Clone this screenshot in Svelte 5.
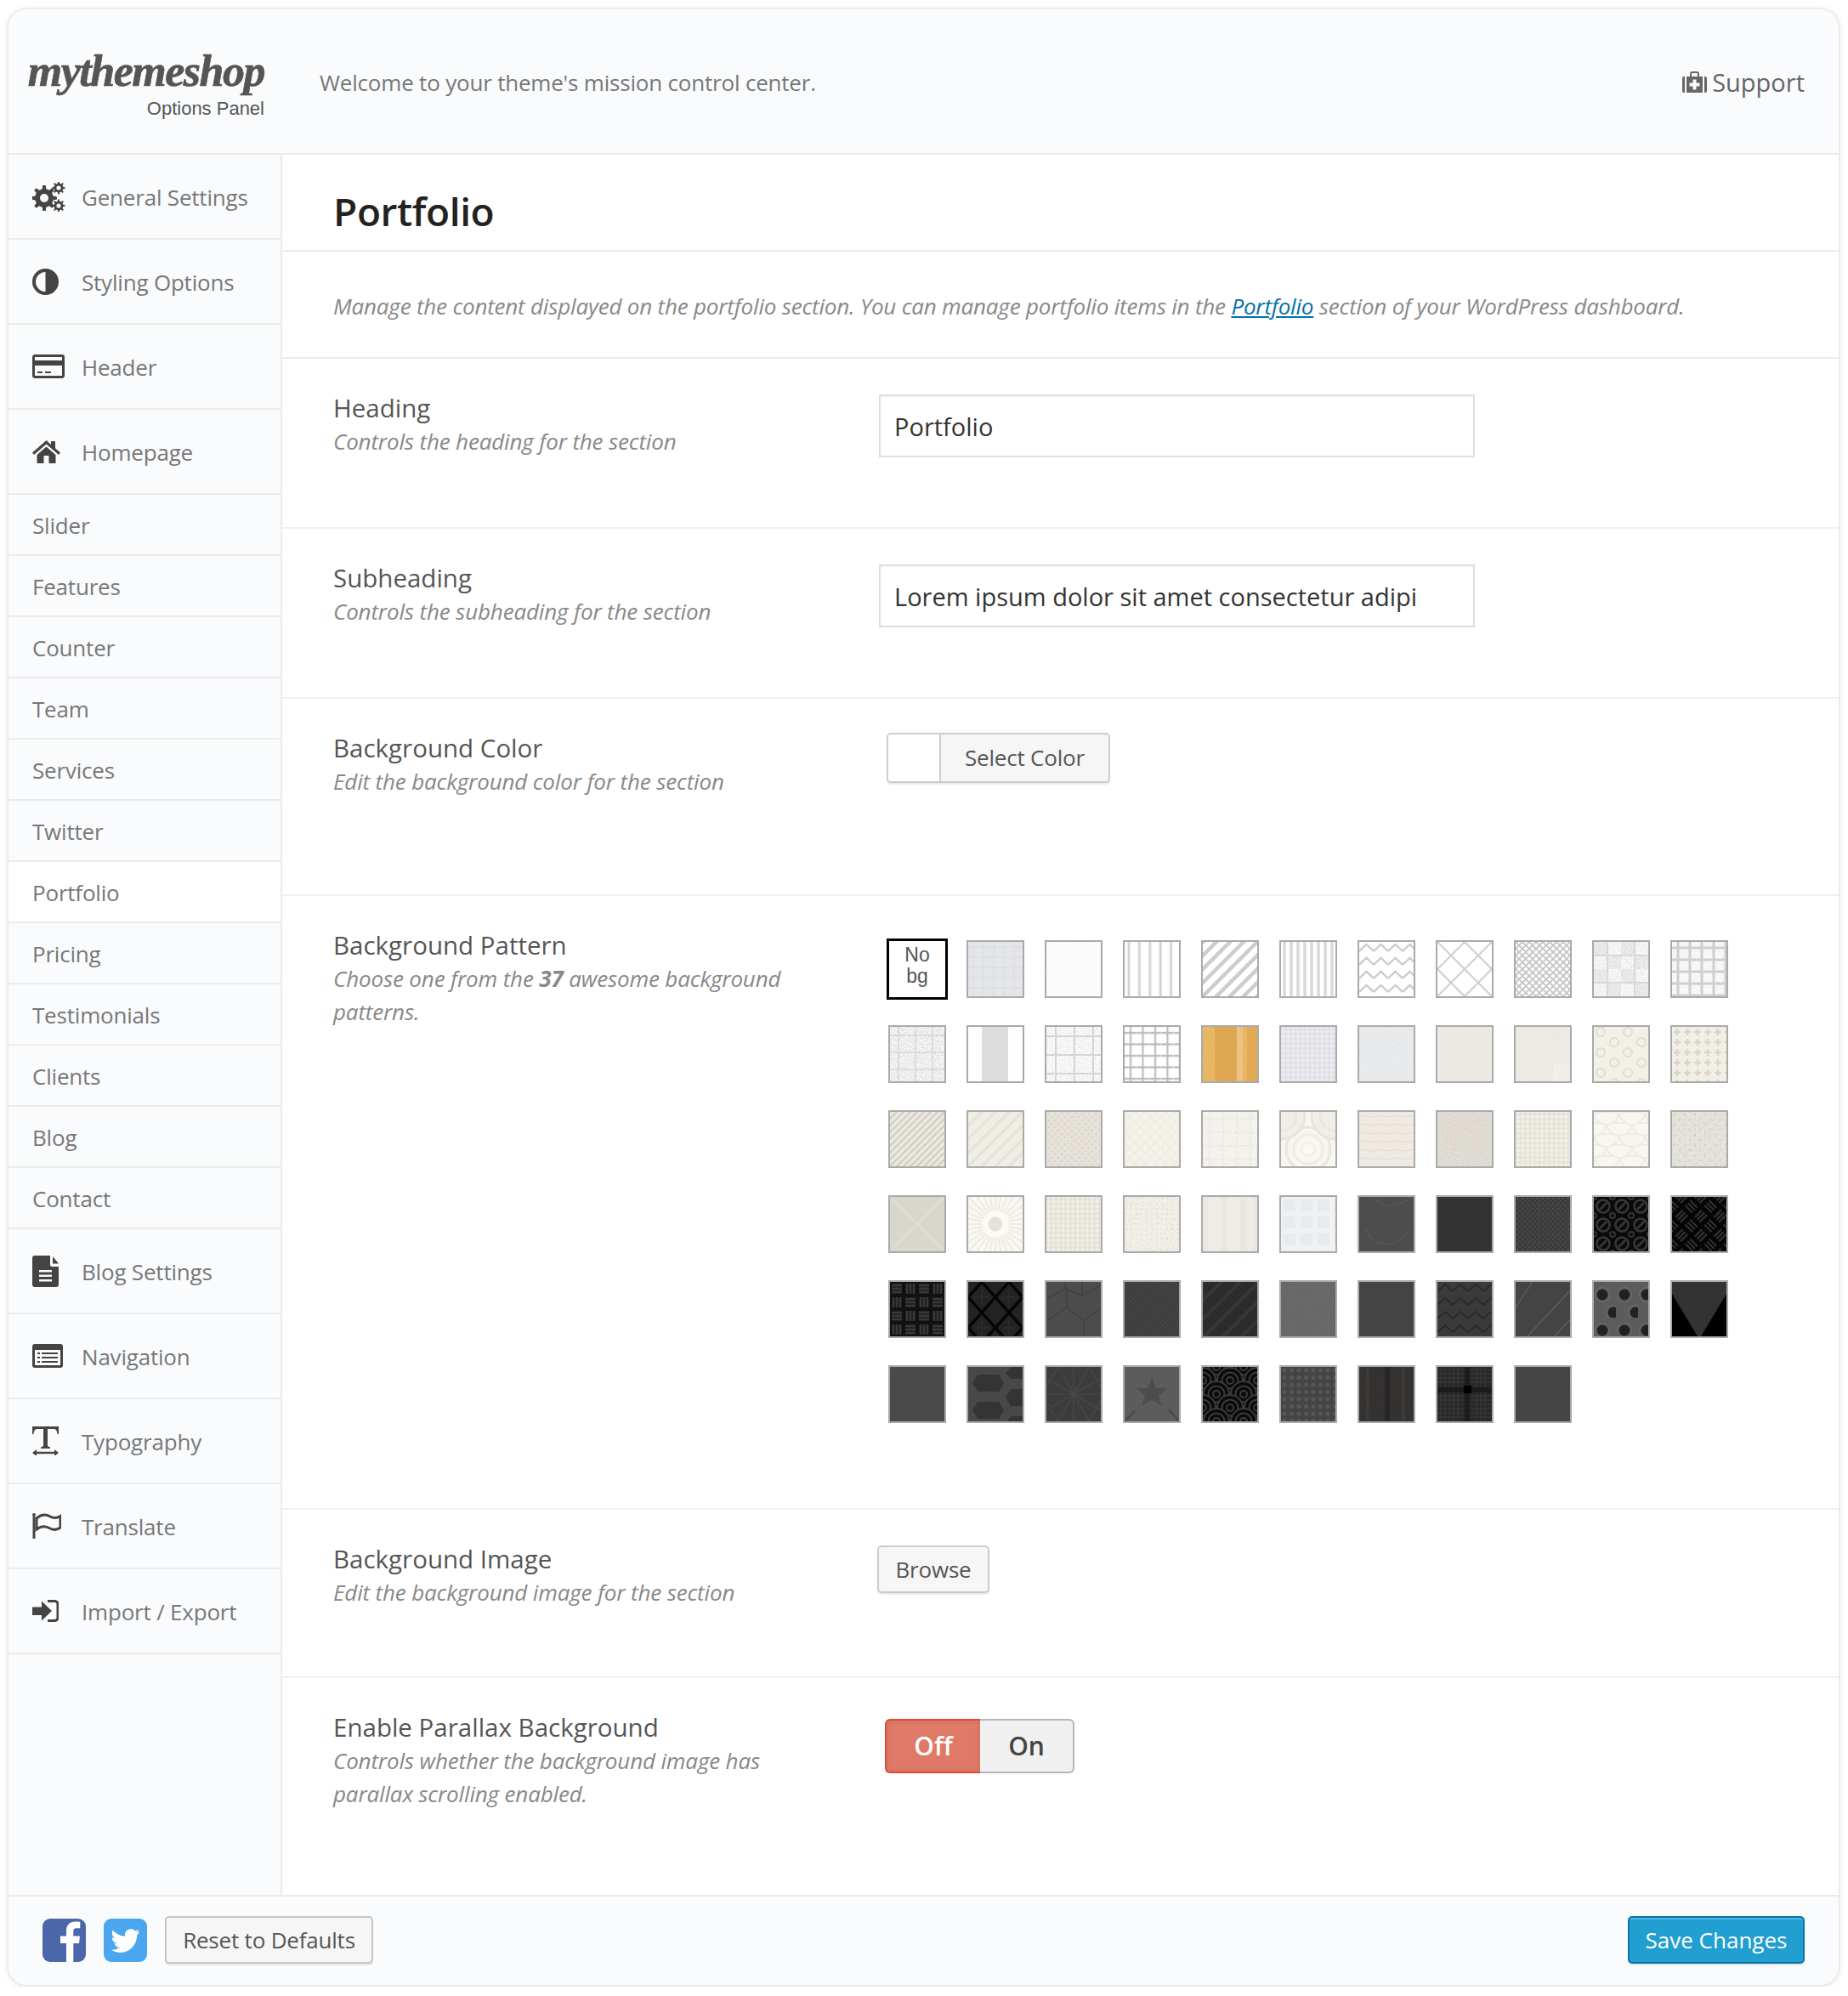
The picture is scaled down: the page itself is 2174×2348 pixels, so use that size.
<script>
  const gear = (cx, cy, R, r, n, hole) => {
    const pts = [];
    const step = (Math.PI * 2) / n;
    for (let i = 0; i < n; i++) {
      const a = i * step;
      const t = step * 0.2;
      [[r, a - t * 1.35], [R, a - t * 0.75], [R, a + t * 0.75], [r, a + t * 1.35]].forEach(([q, b]) =>
        pts.push(`${(cx + q * Math.cos(b)).toFixed(2)} ${(cy + q * Math.sin(b)).toFixed(2)}`)
      );
    }
    return `M${pts.join('L')}Z` + circ(cx, cy, hole);
  };
  function circ(cx, cy, r) {
    return `M${cx - r} ${cy}a${r} ${r} 0 1 0 ${2 * r} 0a${r} ${r} 0 1 0 ${-2 * r} 0z`;
  }
  const D = '#444';
  const W = '#fafbfd';
  const icons = {
    cogs: { w: 39, h: 35, p: [[gear(14, 19, 15, 11, 8, 5), D], [gear(31, 7, 7.5, 5.4, 8, 2.6), D], [gear(31, 28, 7.5, 5.4, 8, 2.6), D]] },
    half: { w: 31, h: 31, p: [[circ(15.5, 15.5, 13.5), 'none', D, 4], ['M15.5 2a13.5 13.5 0 0 1 0 27z', D]] },
    card: { w: 38, h: 28, p: [['M3 1.5h32a1.5 1.5 0 0 1 1.5 1.500v22a1.5 1.500 0 0 1-1.500 1.500h-32a1.500 1.500 0 0 1-1.500-1.500v-22a1.500 1.500 0 0 1 1.500-1.500z', 'none', D, 3], ['M2 7h34v6H2z', D], ['M6 20h6v2H6zM15 20h7v2h-7z', D]] },
    home: { w: 33, h: 28, p: [['M16.500 1 L0 15.500 l2 2.500 L16.500 5.500 L31 18 l2-2.500 L27 10.200 V2h-5v4z', D], ['M5.500 18 V28 h8 V19 h6 v9 h8 V18 L16.500 8.500z', D]] },
    file: { w: 31, h: 37, p: [['M3 0H21V11a2 2 0 0 0 2 2H31V34a3 3 0 0 1-3 3H3a3 3 0 0 1-3-3V3a3 3 0 0 1 3-3z', D], ['M24 1L31 9.500H24z', D], ['M8 17H23V19.500H8zM8 22.500H23V25H8zM8 28H23V30.500H8z', W]] },
    list: { w: 36, h: 28, p: [['M3 0H33a3 3 0 0 1 3 3V25a3 3 0 0 1-3 3H3a3 3 0 0 1-3-3V3a3 3 0 0 1 3-3z', D], ['M3 7H33V25H3z', W], ['M6 10h3v2H6zM6 15h3v2H6zM6 20h3v2H6zM11 10h19v2H11zM11 15h19v2H11zM11 20h19v2H11z', D]] },
    type: { w: 31, h: 34, p: [['M0 0H31V9H29.500C29 5 28 3 25 3H18V23L21 24.500V26H10V24.500L13 23V3H6C3 3 2 5 1.500 9H0z', D], ['M0 31L5 27V29.800H26V27L31 31L26 35V32.200H5V35z', D]] },
    flag: { w: 34, h: 30, p: [['M2 4V30', 'none', D, 3], [circ(2, 2, 2), D], ['M5 6C11 1 16 1 21 4C25 6 29 6 33 3.500V17C29 20 25 20 21 18C16 15 10 15 5 19z', 'none', D, 3]] },
    imp: { w: 31, h: 26, p: [['M0 8.500H11V1.500L23 13L11 24.500V18H0z', D], ['M18 1.500H26A3.500 3.500 0 0 1 30 5V21A3.500 3.500 0 0 1 26 24.500H18', 'none', D, 3]] }
  };

  const main1 = [
    { t: 'General Settings', i: 'cogs' },
    { t: 'Styling Options', i: 'half' },
    { t: 'Header', i: 'card' },
    { t: 'Homepage', i: 'home' }
  ];
  const subs = ['Slider', 'Features', 'Counter', 'Team', 'Services', 'Twitter', 'Portfolio', 'Pricing', 'Testimonials', 'Clients', 'Blog', 'Contact'];
  const main2 = [
    { t: 'Blog Settings', i: 'file' },
    { t: 'Navigation', i: 'list' },
    { t: 'Typography', i: 'type' },
    { t: 'Translate', i: 'flag' },
    { t: 'Import / Export', i: 'imp' }
  ];

  const S = (b, w, h, l = [], n = 0, r = 0) => ({ b, w, h, l, n, r });
  const P = (b, n = 0) => S(b, 64, 64, [], n);
  const grid = (t, c, w) => [[`M${t / 2} 0V${t}M0 ${t / 2}H${t}`, c, w]];
  const diag = (t, c, w) => [[`M${-t / 2} ${t / 2}L${t / 2} ${-t / 2}M0 ${t}L${t} 0M${t / 2} ${t * 1.5}L${t * 1.5} ${t / 2}`, c, w]];
  const cross = (t, c, w) => [[`M0 0L${t} ${t}M${t} 0L0 ${t}`, c, w]];
  const F = (d, f) => [d, null, 0, f];
  const basket = 'M2 4H14M2 8H14M2 12H14M20 2V14M24 2V14M28 2V14M4 18V30M8 18V30M12 18V30M18 20H30M18 24H30M18 28H30';
  const check = (b, c) => S(b, 8, 8, [F('M0 0H4V4H0zM4 4H8V8H4z', c)], 0, 45);
  const rays = (cx, cy, r, n) => Array.from({ length: n }, (_, i) => {
    const a = (i * 2 * Math.PI) / n;
    return `M${cx} ${cy}L${(cx + r * Math.cos(a)).toFixed(1)} ${(cy + r * Math.sin(a)).toFixed(1)}`;
  }).join('');
  const ring = (cx, cy) => [[circ(cx, cy, 15), '#3a3a3a', 2, '#0a0a0a'], [circ(cx, cy, 9.500), '#3a3a3a', 2, '#0a0a0a'], [circ(cx, cy, 4), '#3a3a3a', 2, '#0a0a0a']];
  const scales = () => {
    const out = [];
    for (let row = 6; row >= -1; row--) {
      const y = row * 13;
      const off = row % 2 ? -15 : 0;
      for (let x = off; x < 64; x += 30) {
        out.push([`M${x} ${y}A15 15 0 0 0 ${x + 30} ${y}z`, '#eeebe2', 2, '#f8f6ee']);
      }
    }
    return out;
  };

  const patterns = [
    S('#e6e8eb', 12, 12, grid(12, '#dcdee2', 1), 0.06),
    P('#fcfcfc', 0.02),
    S('#ffffff', 12.400, 12, [['M5 0V12', '#d4d4d4', 3]]),
    S('#ffffff', 16, 16, diag(16, '#cdcdcd', 4.500)),
    S('#ffffff', 8, 8, [['M4 0V8', '#d9d9d9', 3.500]]),
    S('#ffffff', 17, 16, [['M0 11L8.500 3L17 11', '#cccccc', 2.400]]),
    S('#ffffff', 32, 32, cross(32, '#d0d0d0', 2.200)),
    S('#ffffff', 8, 8, cross(8, '#c4c4c4', 1.800)),
    S('#fcfcfc', 32, 32, [F('M0 0H16V16H0zM16 16H32V32H16z', '#f0f0f0'), ...grid(32, '#e0e0e0', 2)], 0.16),
    S('#fbfbfb', 14, 14, grid(14, '#d2d2d2', 3), 0.08),
    S('#fafafa', 20, 20, grid(20, '#dfdfdf', 1.500), 0.22),
    S('#ffffff', 64, 64, [F('M16 0h31v64h-31z', '#dddddd')]),
    S('#fefefe', 22, 22, grid(22, '#dcdcdc', 2), 0.16),
    S('#ffffff', 14.500, 13.500, grid(14, '#bdbdbd', 2.200)),
    S('#edb964', 64, 64, [F('M14 0H42V64H14z', '#e3a950'), F('M40 0H47V64H40z', '#f2c684'), F('M52 0H64V64H52z', '#e7ad52')], 0.1),
    check('#ecebf0', '#dfdfe6'),
    P('#ebedef', 0.07),
    P('#efece5', 0.05),
    S('#efece5', 64, 64, [F('M44 44H64V64H44z', '#f3f0ea')], 0.04),
    S('#f3f0e7', 32, 24, [[circ(8, 6, 5) + circ(24, 18, 5), '#e0ddd3', 2]]),
    S('#f2efe6', 12, 12, [['M6 2V10M2 6H10', '#d9d5ca', 2.500]]),

    S('#ebe8df', 8, 8, diag(8, '#cfccc2', 2)),
    S('#f0ede4', 16, 16, diag(16, '#e5e2d8', 3)),
    S('#ebe7df', 8, 8, [F(circ(2, 2, 1.500) + circ(6, 6, 1.500), '#dfdbd2')], 0.1),
    S('#f5f2ea', 12, 12, cross(12, '#edeae1', 1.500)),
    S('#f9f7f1', 16, 16, grid(16, '#efebe3', 1), 0.1),
    S('#f8f6ee', 64, 64, [[circ(32, 44, 26), '#e8e6de', 3, '#f7f5ed'], [circ(32, 44, 17), '#eeece5', 3, '#f9f7f0'], [circ(32, 44, 8), '#f2f0ea', 3, '#fbfaf4'], [circ(0, 4, 28), '#e6e4dc', 3, '#f0eee7'], [circ(0, 4, 18), '#e9e7df', 3, '#f0eee7'], [circ(64, 4, 28), '#e6e4dc', 3, '#f0eee7'], [circ(64, 4, 18), '#e9e7df', 3, '#f0eee7']]),
    S('#f1ede4', 20, 10, [['M0 5C5 2 10 8 20 5', '#e6e2d8', 1.500]], 0.05),
    P('#e5e1d8', 0.14),
    check('#f1eee5', '#e5e2d8'),
    S('#f8f6ee', 64, 64, scales()),
    S('#ece9e1', 12, 12, [F(circ(3, 3, 1.500) + circ(9, 9, 1.500), '#dedbd2')], 0.16),

    S('#d9d6ce', 64, 64, [['M0 0L64 64M64 0L0 64', '#e2e0d9', 1.200]]),
    S('#f9f7f0', 64, 64, [[rays(32, 32, 46, 32), '#eeebe2', 2], [circ(32, 32, 16), null, 0, '#fbfaf5'], [circ(32, 32, 8.500), null, 0, '#e3e2dc']]),
    check('#f1eee6', '#e3e0d7'),
    S('#f7f4ec', 6, 6, [F(circ(2, 2, 1), '#ece8de')], 0.14),
    S('#ebe7df', 64, 64, [F('M6 0H22V64H6zM28 0H44V64H28zM52 0H60V64H52z', '#efece5')]),
    S('#f0f1f3', 20, 20, [F('M3 3H17V17H3z', '#e9eaed')]),
    S('#4d4d4d', 64, 64, [['M18 0C26 14 40 14 62 0M6 36C18 62 44 62 62 36', '#575757', 1.200]]),
    P('#333333', 0.02),
    S('#3b3b3b', 6, 6, [F(circ(2, 2, 1.400) + circ(5, 5, 1.400), '#4a4a4a')]),
    S('#0a0a0a', 22, 22, [[circ(11, 11, 7.500), '#383838', 2.500], ['M7 15L15 7', '#383838', 2.500], [circ(0, 0, 3) + circ(22, 0, 3) + circ(0, 22, 3) + circ(22, 22, 3), '#333', 2]]),
    S('#050505', 32, 32, [[basket, '#333333', 2.200]], 0, 45),

    S('#111111', 32, 32, [[basket, '#383838', 2.800]]),
    S('#232323', 32, 36, [['M16 0L32 18L16 36L0 18z', '#050505', 3.500], ['M16 10V26M8 18H24', '#2c2c2c', 1.500]]),
    S('#4c4c4c', 64, 64, [['M0 20L22 8V0M42 0L42 16L64 4M0 46L24 30L44 46V64M44 46L64 30M22 8L42 16M24 30V8', '#434343', 2]]),
    S('#3e3e3e', 6, 6, diag(6, '#464646', 1.200)),
    S('#2c2c2c', 22, 22, diag(22, '#373737', 3.500)),
    P('#666666', 0.3),
    P('#444444', 0.02),
    S('#3a3a3a', 18, 16, [['M0 11L9 3L18 11', '#292929', 2]]),
    S('#444444', 64, 64, [['M-4 36L20 0M14 64L64 10M46 64L64 44', '#5e5e5e', 1.200]]),
    S('#5b5b5b', 26, 42, [F(circ(10, 15, 6.500) + circ(23, 36, 6.500), '#1f1f1f'), [circ(10, 15, 8.500) + circ(23, 36, 8.500), '#6c6c6c', 1]], 0.08),
    S('#000000', 64, 64, [F('M0 0H64V14L34 64H30L0 14z', '#333333')]),

    P('#4a4a4a', 0.02),
    S('#484848', 64, 64, [F('M5 19L11 9H36L42 19L36 29H11zM5 51L11 41H36L42 51L36 61H11zM44 36L50 26H64V46H50zM50 0H64V14H50L44 7zM50 58H64V64H46z', '#343434')]),
    S('#3c3c3c', 64, 64, [[rays(32, 32, 46, 12) + 'M14 0L0 24M50 0L64 24M14 64L0 40M50 64L64 40', '#484848', 1.200]]),
    S('#5c5c5c', 64, 64, [F('M32 12L37 25L50 25L40 34L44 46L32 39L20 46L24 34L14 25L27 25z', '#4d4d4d'), ['M0 64L12 52M64 64L52 50', '#4c4c4c', 3]]),
    S('#0a0a0a', 32, 32, [...ring(16, 0), ...ring(0, 16), ...ring(32, 16), ...ring(16, 32)]),
    S('#444444', 8.500, 8.500, [F(circ(4, 4, 2.500), '#565656')]),
    S('#322f2f', 64, 64, [F('M30 0H36V64H30z', '#242222'), F('M8 0H12V64H8zM50 0H54V64H50z', '#3a3737')], 0.08),
    S('#282828', 64, 64, [['M0 3H64M0 8H64M0 13H64M0 18H64M0 34H64M0 39H64M0 44H64M0 49H64M0 54H64M0 59H64M4 0V64M9 0V64M14 0V64M19 0V64M24 0V64M46 0V64M51 0V64M56 0V64', '#393939', 1], F('M0 24H64V30H0z', '#1b1b1b'), F('M32 0H38V64H32z', '#1c1c1c'), F('M31 22H40V31H31z', '#000000')]),
    P('#444444', 0.06)
  ];
</script>

<svg class="defs" aria-hidden="true">
  <filter id="grain" x="0" y="0" width="100%" height="100%">
    <feTurbulence type="fractalNoise" baseFrequency="0.7" numOctaves="2" seed="4" />
    <feColorMatrix type="matrix" values="0 0 0 0 0.2  0 0 0 0 0.2  0 0 0 0 0.2  3 0 0 0 -1.100" />
  </filter>
</svg>

{#snippet icon(name)}
  <svg class="icon" width={icons[name].w} height={icons[name].h} viewBox="0 0 {icons[name].w} {icons[name].h}">
    {#each icons[name].p as s}
      <path d={s[0]} fill={s[1] || 'none'} stroke={s[2] || 'none'} stroke-width={s[3] || 0} fill-rule="evenodd" />
    {/each}
  </svg>
{/snippet}

<div class="panel">
  <header class="top">
    <div class="logo">
      <span class="brand">mythemeshop</span>
      <span class="brand-sub">Options Panel</span>
    </div>
    <p class="welcome">Welcome to your theme's mission control center.</p>
    <a class="support" href="#support">
      <svg width="29" height="25" viewBox="0 0 29 25">
        <path d="M0 8a2 2 0 0 1 2-2h1v19H2a2 2 0 0 1-2-2zM29 8a2 2 0 0 0-2-2h-1v19h1a2 2 0 0 0 2-2z" fill="#666" />
        <path d="M5 6h19v19H5z" fill="#666" />
        <path d="M10 6V3a2 2 0 0 1 2-2h5a2 2 0 0 1 2 2v3" fill="none" stroke="#666" stroke-width="2" />
        <path d="M12.500 9.500h4v4h4v4h-4v4h-4v-4h-4v-4h4z" fill="#fafbfd" />
      </svg>
      Support
    </a>
  </header>

  <div class="body">
    <nav class="side">
      {#each main1 as it}
        <a class="nav" href="#n"><span class="ibox">{@render icon(it.i)}</span>{it.t}</a>
      {/each}
      {#each subs as s}
        <a class="sub" class:active={s === 'Portfolio'} href="#s">{s}</a>
      {/each}
      {#each main2 as it}
        <a class="nav" href="#n"><span class="ibox">{@render icon(it.i)}</span>{it.t}</a>
      {/each}
    </nav>

    <main class="content">
      <h1 class="title">Portfolio</h1>
      <p class="intro">Manage the content displayed on the portfolio section. You can manage portfolio items in the <a href="#p">Portfolio</a> section of your WordPress dashboard.</p>

      <section class="row h198">
        <div class="label"><h3>Heading</h3><p>Controls the heading for the section</p></div>
        <input class="text" readonly value="Portfolio" />
      </section>
      <section class="row h198">
        <div class="label"><h3>Subheading</h3><p>Controls the subheading for the section</p></div>
        <input class="text" readonly value="Lorem ipsum dolor sit amet consectetur adipi" />
      </section>
      <section class="row h231">
        <div class="label"><h3>Background Color</h3><p>Edit the background color for the section</p></div>
        <button class="color"><span class="chip"></span><span class="color-txt">Select Color</span></button>
      </section>
      <section class="row h720">
        <div class="label"><h3>Background Pattern</h3><p>Choose one from the <b>37</b> awesome background patterns.</p></div>
        <div class="patterns">
          <div class="nobg">No<br />bg</div>
          {#each patterns as p, i}
            <svg class="swatch" viewBox="0 0 64 64">
              <defs>
                <pattern id="pt{i}" width={p.w} height={p.h} patternUnits="userSpaceOnUse" patternTransform={p.r ? `rotate(${p.r})` : undefined}>
                  {#each p.l as a}
                    <path d={a[0]} stroke={a[1] || 'none'} stroke-width={a[2] || 0} fill={a[3] || 'none'} />
                  {/each}
                </pattern>
              </defs>
              <rect width="64" height="64" fill={p.b} />
              <rect width="64" height="64" fill="url(#pt{i})" />
              {#if p.n}
                <rect width="64" height="64" filter="url(#grain)" opacity={p.n} />
              {/if}
            </svg>
          {/each}
        </div>
      </section>
      <section class="row h196">
        <div class="label"><h3>Background Image</h3><p>Edit the background image for the section</p></div>
        <button class="browse">Browse</button>
      </section>
      <section class="row last">
        <div class="label"><h3>Enable Parallax Background</h3><p>Controls whether the background image has parallax scrolling enabled.</p></div>
        <div class="toggle"><span class="off">Off</span><span class="on">On</span></div>
      </section>
    </main>
  </div>

  <footer class="bottom">
    <svg class="social" viewBox="0 0 51 51">
      <rect width="51" height="51" rx="9" fill="#4b67a9" />
      <path d="M28 51V29h-7v-8.500h7v-6C28 7 32.500 3.500 38.500 3.500c3 0 5 .2 5.800.4v7.400h-4c-3.400 0-4 1.600-4 4v5.200h7.700l-1 8.500h-6.700v22z" fill="#fff" />
    </svg>
    <svg class="social" viewBox="0 0 51 51">
      <rect width="51" height="51" rx="9" fill="#4aa6ee" />
      <g transform="translate(8.500 9) scale(1.420)">
        <path d="M23.953 4.570a10 10 0 01-2.825.775 4.958 4.958 0 002.163-2.723c-.951.555-2.005.959-3.127 1.184a4.920 4.920 0 00-8.384 4.482C7.690 8.095 4.067 6.130 1.640 3.162a4.822 4.822 0 00-.666 2.475c0 1.710.870 3.213 2.188 4.096a4.904 4.904 0 01-2.228-.616v.060a4.923 4.923 0 003.946 4.827 4.996 4.996 0 01-2.212.085 4.936 4.936 0 004.604 3.417 9.867 9.867 0 01-6.102 2.105c-.390 0-.779-.023-1.170-.067a13.995 13.995 0 007.557 2.209c9.053 0 13.998-7.496 13.998-13.985 0-.210 0-.420-.015-.630A9.935 9.935 0 0024 4.590z" fill="#fff" />
      </g>
    </svg>
    <button class="reset">Reset to Defaults</button>
    <button class="save">Save Changes</button>
  </footer>
</div>

<style>
  :global(body) {
    margin: 0;
    background: #fff;
    font-family: "Open Sans", "Liberation Sans", sans-serif;
  }
  .defs {
    position: absolute;
    width: 0;
    height: 0;
  }
  .panel {
    box-sizing: border-box;
    width: 2157px;
    margin: 9px 0 0 8px;
    border: 2px solid #ebebeb;
    border-top-color: #ededed;
    border-radius: 24px;
    background: #fff;
    box-shadow: 0 1px 6px rgba(0, 0, 0, 0.08);
    overflow: hidden;
  }
  .top {
    box-sizing: border-box;
    height: 171px;
    display: flex;
    align-items: center;
    background: #fafbfd;
    border-bottom: 2px solid #ebebeb;
    padding: 0 40px 0 27px;
  }
  .logo {
    width: 339px;
    box-sizing: border-box;
    padding-right: 65px;
    display: flex;
    flex-direction: column;
    align-items: flex-end;
    margin-top: 10px;
  }
  .brand {
    font-family: "Liberation Serif", serif;
    font-weight: 700;
    font-style: italic;
    font-size: 52px;
    line-height: 50px;
    letter-spacing: -1.500px;
    -webkit-text-stroke: 0.7px #555;
    color: #555;
  }
  .brand-sub {
    font-family: "Liberation Sans", sans-serif;
    font-size: 22px;
    line-height: 30px;
    margin-top: 4px;
    color: #555;
  }
  .welcome {
    flex: 1;
    margin: 2px 0 0;
    font-size: 26px;
    letter-spacing: -0.2px;
    color: #777;
  }
  .support {
    display: flex;
    align-items: center;
    gap: 6px;
    font-size: 29px;
    color: #666;
    text-decoration: none;
    margin-top: 2px;
  }
  .body {
    display: flex;
  }
  .side {
    box-sizing: border-box;
    width: 322px;
    flex: none;
    background: #fafbfd;
    border-right: 2px solid #ebebeb;
  }
  .nav,
  .sub {
    box-sizing: border-box;
    display: flex;
    align-items: center;
    border-bottom: 2px solid #ebebeb;
    color: #777;
    font-size: 26px;
    letter-spacing: -0.2px;
    text-decoration: none;
    padding: 2px 0 0 28px;
  }
  .nav {
    height: 100px;
  }
  .sub {
    height: 72px;
  }
  .sub.active {
    background: #fff;
  }
  .ibox {
    width: 58px;
    flex: none;
    display: flex;
    align-items: center;
    margin-top: -2px;
  }
  .content {
    flex: 1;
    min-width: 0;
  }
  .title {
    box-sizing: border-box;
    height: 114px;
    margin: 0;
    padding: 33px 0 0 60px;
    border-bottom: 2px solid #ebebeb;
    font-size: 46px;
    line-height: 66px;
    letter-spacing: -0.4px;
    font-weight: 600;
    color: #222;
  }
  .intro {
    box-sizing: border-box;
    height: 126px;
    margin: 0;
    padding: 44px 0 0 60px;
    border-bottom: 2px solid #ebebeb;
    font-size: 26px;
    letter-spacing: -0.2px;
    line-height: 40px;
    font-style: italic;
    color: #888;
  }
  .intro a {
    color: #0073aa;
  }
  .row {
    box-sizing: border-box;
    display: flex;
    padding: 38px 0 0 60px;
    border-bottom: 2px solid #f0f0f0;
  }
  .h198 {
    height: 200px;
  }
  .h231 {
    height: 232px;
  }
  .h720 {
    height: 722px;
  }
  .h196 {
    height: 198px;
  }
  .last {
    height: 255px;
    border-bottom: 0;
  }
  .label {
    width: 641px;
    flex: none;
    box-sizing: border-box;
    padding-right: 70px;
  }
  .label h3 {
    margin: 0;
    font-size: 29.500px;
    line-height: 40px;
    font-weight: 400;
    color: #555;
  }
  .label p {
    margin: 0;
    font-size: 26px;
    letter-spacing: -0.16px;
    line-height: 39px;
    font-style: italic;
    color: #888;
  }
  .text {
    box-sizing: border-box;
    width: 701px;
    height: 74px;
    margin: 4px 0 0 1px;
    padding: 0 16px;
    border: 2px solid #dedede;
    background: #fff;
    font: 29px "Open Sans", sans-serif;
    color: #333;
    outline: none;
    box-shadow: inset 0 1px 2px rgba(0, 0, 0, 0.05);
  }
  .color {
    box-sizing: border-box;
    display: flex;
    width: 263px;
    height: 59px;
    margin: 2px 0 0 10px;
    padding: 0;
    border: 2px solid #cccccc;
    border-radius: 5px;
    background: #f6f6f6;
    box-shadow: 0 2px 0 rgba(0, 0, 0, 0.08);
    overflow: hidden;
    font: 26px "Open Sans", sans-serif;
    letter-spacing: -0.2px;
    color: #555;
  }
  .chip {
    width: 60px;
    height: 100%;
    flex: none;
    background: #fff;
    border-right: 2px solid #cccccc;
  }
  .color-txt {
    flex: 1;
    line-height: 55px;
    text-align: center;
  }
  .patterns {
    display: grid;
    grid-template-columns: repeat(11, 68px);
    column-gap: 24px;
    row-gap: 32px;
    margin: 14px 0 0 12px;
    align-content: start;
  }
  .nobg {
    box-sizing: border-box;
    width: 72px;
    height: 72px;
    margin: -2px;
    border: 3px solid #000;
    background: #fff;
    font: 23px/25px "Liberation Sans", sans-serif;
    color: #555;
    text-align: center;
    padding-top: 4px;
  }
  .swatch {
    display: block;
    box-sizing: border-box;
    width: 68px;
    height: 68px;
    border: 2px solid #aaaaaa;
  }
  .browse {
    box-sizing: border-box;
    width: 132px;
    height: 56px;
    margin: 4px 0 0 -1px;
    border: 2px solid #cccccc;
    border-radius: 5px;
    background: #f6f6f6;
    box-shadow: 0 2px 0 rgba(0, 0, 0, 0.08);
    font: 26px "Open Sans", sans-serif;
    letter-spacing: -0.2px;
    color: #555;
    padding: 0;
  }
  .toggle {
    display: flex;
    width: 223px;
    height: 64px;
    margin: 10px 0 0 8px;
    font-size: 30px;
    font-weight: 600;
    line-height: 60px;
    text-align: center;
  }
  .off {
    box-sizing: border-box;
    width: 112px;
    border: 2px solid #dd4b33;
    border-right: 0;
    border-radius: 6px 0 0 6px;
    background: #e07a68;
    box-shadow: inset 0 0 6px rgba(150, 70, 50, 0.25);
    color: #fff;
  }
  .on {
    box-sizing: border-box;
    flex: 1;
    border: 2px solid #b5b5b5;
    border-left: 0;
    border-radius: 0 6px 6px 0;
    background: #f0f0f0;
    color: #444;
  }
  .bottom {
    box-sizing: border-box;
    height: 106px;
    display: flex;
    align-items: flex-start;
    gap: 21px;
    padding: 23px 40px 0 40px;
    background: #fafbfd;
    border-top: 2px solid #ebebeb;
  }
  .social {
    width: 51px;
    height: 51px;
    flex: none;
    margin-top: 3px;
  }
  .reset {
    box-sizing: border-box;
    width: 245px;
    height: 56px;
    border: 2px solid #c6c6c6;
    border-radius: 5px;
    background: #f6f6f6;
    box-shadow: 0 2px 0 rgba(0, 0, 0, 0.08);
    font: 26px "Open Sans", sans-serif;
    letter-spacing: -0.2px;
    color: #555;
    padding: 0;
  }
  .save {
    box-sizing: border-box;
    width: 208px;
    height: 56px;
    margin-left: auto;
    border: 2px solid #0a73a8;
    border-radius: 5px;
    background: #219fd0;
    box-shadow: inset 0 2px 0 #4db8e0, 0 2px 0 rgba(0, 0, 0, 0.08);
    font: 26px "Open Sans", sans-serif;
    color: #fff;
    padding: 0;
  }
</style>
